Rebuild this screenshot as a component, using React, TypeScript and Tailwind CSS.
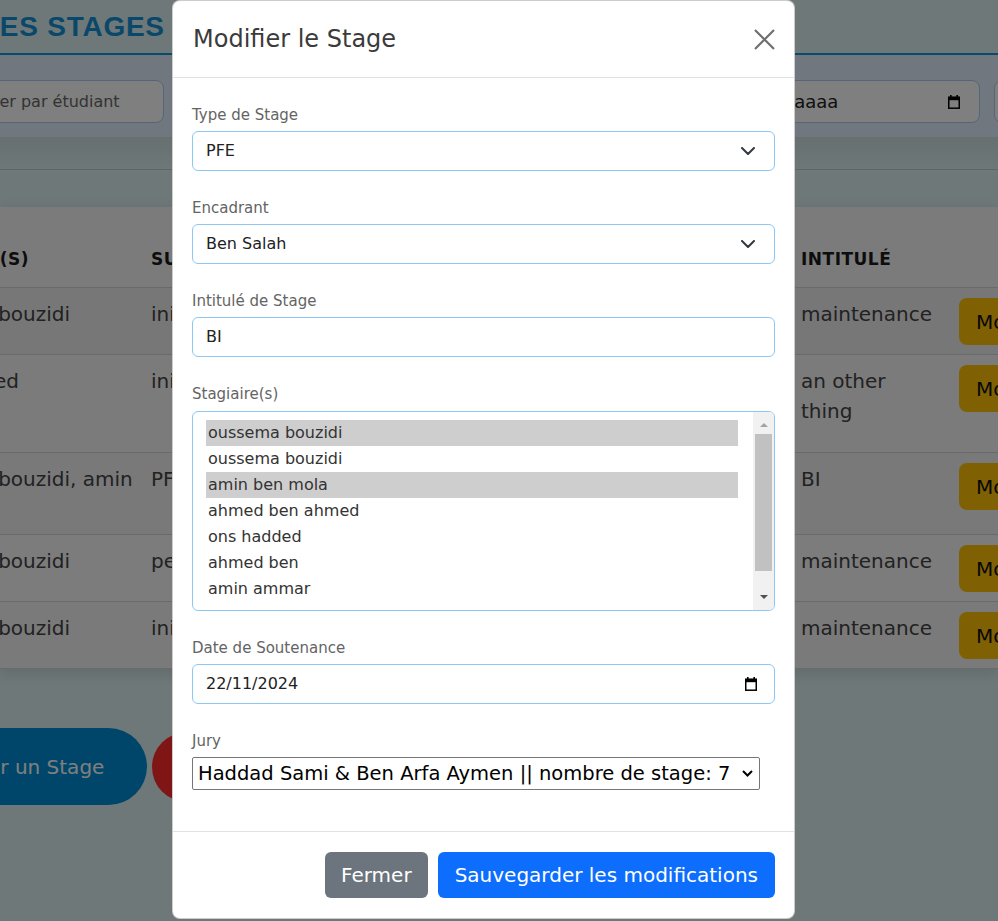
import React from "react";

const Chevron = ({ className = "" }: { className?: string }) => (
  <svg width="14" height="8" viewBox="0 0 14 8" className={className}>
    <path d="M1 1l6 6 6-6" fill="none" stroke="#343a40" strokeWidth="2" strokeLinecap="round" strokeLinejoin="round" />
  </svg>
);

const CalendarIcon = () => (
  <svg width="12" height="14" viewBox="0 0 12 14">
    <rect x="2" y="0" width="1.6" height="2.5" fill="#000" />
    <rect x="8.4" y="0" width="1.6" height="2.5" fill="#000" />
    <rect x="0.75" y="2.2" width="10.5" height="11" fill="none" stroke="#000" strokeWidth="1.5" />
    <rect x="0" y="2" width="12" height="3.2" fill="#000" />
  </svg>
);

const rows = [
  { name: "oussema bouzidi", sujet: "initiation", intitule: ["maintenance"], h: "h-[67px]", bg: "bg-[#efefef]" },
  { name: "ons hadded", sujet: "initiation", intitule: ["an other", "thing"], h: "h-[98px]", bg: "bg-[#f6f6f6]" },
  { name: "oussema bouzidi, amin", sujet: "PFE", intitule: ["BI"], h: "h-[82px]", bg: "bg-[#f2f2f2]" },
  { name: "oussema bouzidi", sujet: "perfectionnement", intitule: ["maintenance"], h: "h-[67px]", bg: "bg-[#f9f9f9]" },
  { name: "oussema bouzidi", sujet: "initiation", intitule: ["maintenance"], h: "h-[67px]", bg: "bg-[#f4f4f4]" },
];

const options = [
  { t: "oussema bouzidi", s: true },
  { t: "oussema bouzidi", s: false },
  { t: "amin ben mola", s: true },
  { t: "ahmed ben ahmed", s: false },
  { t: "ons hadded", s: false },
  { t: "ahmed ben", s: false },
  { t: "amin ammar", s: false },
];

export default function App() {
  return (
    <div className="relative h-[921px] w-full overflow-hidden bg-[#dcf0f0] font-['DejaVu_Sans',sans-serif]">
      {/* underlying page */}
      <div className="flex flex-col">
        <header className="h-[55px] border-b-2 border-[#1494d8] flex items-center">
          <h1 className="-ml-[18px] text-[28px] leading-none font-bold tracking-[0.75px] text-[#1290d4] whitespace-nowrap font-['Liberation_Sans',sans-serif]">
            LES STAGES
          </h1>
        </header>
        <div className="h-[82px] bg-[#e2eefe] flex gap-[14px] pt-[25px] overflow-hidden">
          <div className="shrink-0 -ml-[44px] w-[208px] h-[43px] bg-white border border-[#a8cdf0] rounded-[8px] flex items-center pl-[13px] text-[16px] text-[#666] whitespace-nowrap">
            Filtrer par étudiant
          </div>
          <div className="shrink-0 w-[542px] h-[43px] bg-white border border-[#a8cdf0] rounded-[8px]" />
          <div className="shrink-0 w-[246px] h-[43px] bg-white border border-[#a8cdf0] rounded-[8px] flex items-center justify-between pl-[2px] pr-[19px] text-[18px] text-[#222]">
            <span>jj/mm/aaaa</span>
            <CalendarIcon />
          </div>
          <div className="shrink-0 w-[200px] h-[43px] bg-white border border-[#a8cdf0] rounded-[8px]" />
        </div>
        <div className="h-[33px] bg-gradient-to-b from-[#cfe0e0] to-[#dcf0f0] border-b border-[#bccaca]" />
        <div className="h-[37px]" />
        {/* table */}
        <div className="bg-[#f6f6f6] shadow-[0_4px_14px_rgba(0,0,0,0.12)]">
          <div className="-ml-[120px] flex flex-col">
            <div className="h-[81px] flex items-end pb-[15px] border-b border-[#d4d4d4] text-[17px] font-bold tracking-[0.5px] text-[#1a1a1a] whitespace-nowrap">
              <div className="shrink-0 w-[249px] pl-[15px]">STAGIAIRE(S)</div>
              <div className="shrink-0 w-[325px] pl-[22px]">SUJET</div>
              <div className="shrink-0 w-[325px] pl-[22px]">TYPE</div>
              <div className="shrink-0 w-[158px] pl-[22px]">INTITULÉ</div>
              <div className="shrink-0 w-[200px] pl-[22px]" />
            </div>
            {rows.map((r, i) => (
              <div key={i} className={`${r.h} ${r.bg} flex border-b border-[#d4d4d4] text-[20px] leading-[30px] text-[#444] whitespace-nowrap`}>
                <div className="shrink-0 w-[249px] pl-[22px] pt-[11px]">{r.name}</div>
                <div className="shrink-0 w-[325px] pl-[22px] pt-[11px]">{r.sujet}</div>
                <div className="shrink-0 w-[325px] pl-[22px] pt-[11px]">PFE</div>
                <div className="shrink-0 w-[158px] pl-[22px] pt-[11px]">
                  {r.intitule.map((l, j) => (
                    <div key={j}>{l}</div>
                  ))}
                </div>
                <div className="shrink-0 w-[250px] pl-[22px] pt-[10px]">
                  <div className="h-[47px] w-[120px] rounded-[8px] bg-[#ffc107] text-[#111] flex items-center pl-[17px]">
                    Modifier
                  </div>
                </div>
              </div>
            ))}
          </div>
        </div>
        <div className="pt-[59px] flex items-center">
          <div className="shrink-0 -ml-[112px] w-[259px] h-[77px] rounded-full bg-[#008cd6] text-white text-[20px] flex items-center pl-[48px] whitespace-nowrap">
            Ajouter un Stage
          </div>
          <div className="shrink-0 ml-[5px] w-[240px] h-[70px] rounded-full bg-[#ff2b2b]" />
        </div>
      </div>

      {/* backdrop */}
      <div className="absolute inset-0 bg-black/50" />

      {/* modal */}
      <div className="absolute left-[172px] top-0 w-[623px] h-[919px] bg-white rounded-[8px] border border-black/20 flex flex-col">
        <div className="h-[77px] border-b border-[#dee2e6] flex items-center justify-between pl-[20px] pr-[19px]">
          <h5 className="text-[24px] text-[#3b3b3b]">Modifier le Stage</h5>
          <svg width="21" height="21" viewBox="0 0 21 21">
            <path d="M1 1l19 19M20 1L1 20" stroke="#6f6f6f" strokeWidth="2.2" />
          </svg>
        </div>
        <div className="flex-1 px-[19px] pt-[26px]">
          <div className="mb-[26px]">
            <label className="block text-[15px] leading-[22px] text-[#646464] mb-[5px]">Type de Stage</label>
            <div className="h-[40px] border border-[#8cc8f5] rounded-[6px] flex items-center justify-between pl-[13px] pr-[19px] text-[16px] text-[#222]">
              <span>PFE</span>
              <Chevron />
            </div>
          </div>
          <div className="mb-[26px]">
            <label className="block text-[15px] leading-[22px] text-[#646464] mb-[5px]">Encadrant</label>
            <div className="h-[40px] border border-[#8cc8f5] rounded-[6px] flex items-center justify-between pl-[13px] pr-[19px] text-[16px] text-[#222]">
              <span>Ben Salah</span>
              <Chevron />
            </div>
          </div>
          <div className="mb-[26px]">
            <label className="block text-[15px] leading-[22px] text-[#646464] mb-[5px]">Intitulé de Stage</label>
            <div className="h-[40px] border border-[#8cc8f5] rounded-[6px] flex items-center pl-[13px] text-[16px] text-[#222]">
              BI
            </div>
          </div>
          <div className="mb-[26px]">
            <label className="block text-[15px] leading-[22px] text-[#646464] mb-[6px]">Stagiaire(s)</label>
            <div className="h-[200px] border border-[#8cc8f5] rounded-[6px] flex overflow-hidden">
              <div className="flex-1 pl-[13px] pr-[15px] pt-[8px] text-[16px] text-[#333]">
                {options.map((o, i) => (
                  <div key={i} className={`h-[26px] leading-[26px] pl-[2px] ${o.s ? "bg-[#cecece]" : ""}`}>
                    {o.t}
                  </div>
                ))}
              </div>
              <div className="w-[21px] bg-[#f1f1f1] flex flex-col items-center">
                <svg width="10" height="22" viewBox="0 0 10 22">
                  <path d="M1 15l4-4 4 4z" fill="#a3a3a3" />
                </svg>
                <div className="w-[17px] h-[137px] bg-[#c1c1c1]" />
                <div className="flex-1" />
                <svg width="10" height="22" viewBox="0 0 10 22">
                  <path d="M1 7l4 4 4-4z" fill="#505050" />
                </svg>
              </div>
            </div>
          </div>
          <div className="mb-[26px]">
            <label className="block text-[15px] leading-[22px] text-[#646464] mb-[5px]">Date de Soutenance</label>
            <div className="h-[40px] border border-[#8cc8f5] rounded-[6px] flex items-center justify-between pl-[13px] pr-[17px] text-[16px] text-[#222]">
              <span>22/11/2024</span>
              <CalendarIcon />
            </div>
          </div>
          <div>
            <label className="block text-[15px] leading-[22px] text-[#646464] mb-[5px]">Jury</label>
            <div className="w-[568px] h-[33px] border border-[#767676] rounded-[2px] flex items-center justify-between pl-[5px] pr-[6px] text-[19.5px] text-black whitespace-nowrap">
              <span>Haddad Sami &amp; Ben Arfa Aymen || nombre de stage: 7</span>
              <svg width="11" height="7" viewBox="0 0 11 7">
                <path d="M1 1l4.5 4.5L10 1" fill="none" stroke="#000" strokeWidth="2" />
              </svg>
            </div>
          </div>
        </div>
        <div className="h-[87px] border-t border-[#dee2e6] flex items-center justify-end gap-[10px] px-[19px]">
          <button className="h-[46px] px-[16px] rounded-[6px] bg-[#6c757d] text-white text-[20px]">Fermer</button>
          <button className="h-[46px] px-[17px] rounded-[6px] bg-[#0d6efd] text-white text-[20px]">
            Sauvegarder les modifications
          </button>
        </div>
      </div>
    </div>
  );
}
